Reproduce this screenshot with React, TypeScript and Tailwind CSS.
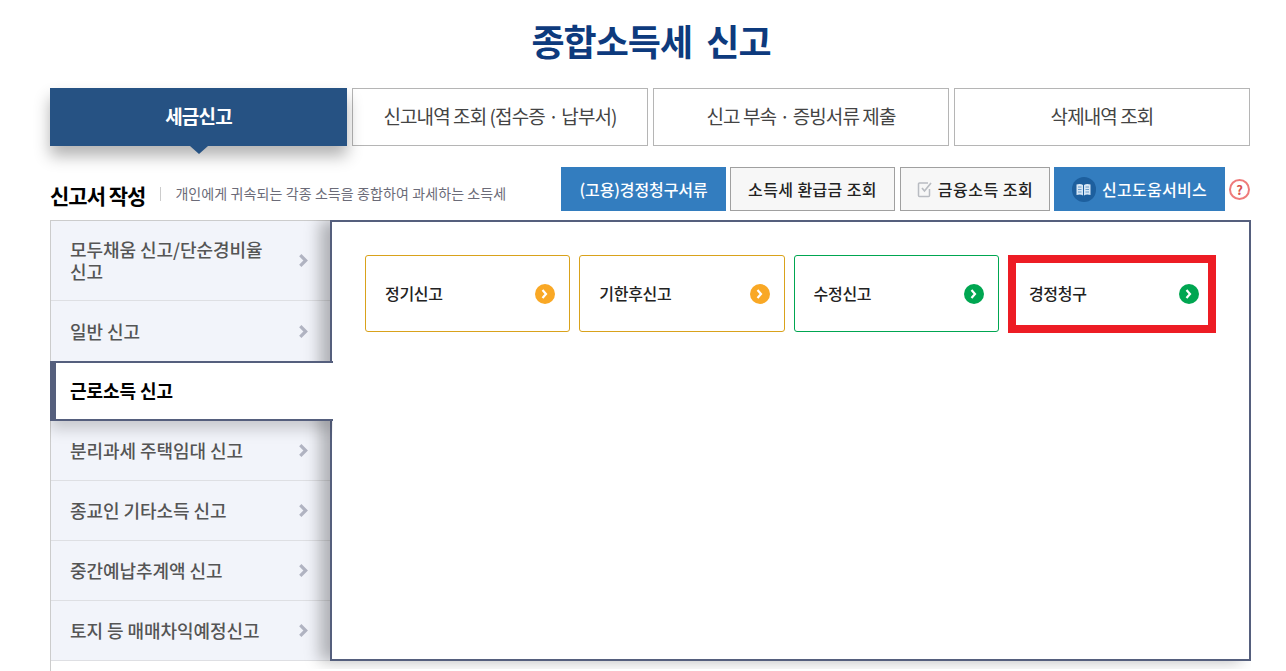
const FONT = "font-['Noto_Sans_CJK_KR','Noto_Sans',sans-serif]"

const tabs = ['신고내역 조회 (접수증 · 납부서)', '신고 부속 · 증빙서류 제출', '삭제내역 조회']

const cards = [
  { label: '정기신고', border: 'border-[#d9a21b]', dot: 'bg-[#f9a825]' },
  { label: '기한후신고', border: 'border-[#d9a21b]', dot: 'bg-[#f9a825]' },
  { label: '수정신고', border: 'border-[#00a651]', dot: 'bg-[#00a651]' },
]

const Chevron = ({ className }: { className: string }) => (
  <svg className={className} viewBox="0 0 10 14" fill="none">
    <path d="M2 2l5 5-5 5" stroke="currentColor" strokeWidth="3" />
  </svg>
)

const Dot = ({ color }: { color: string }) => (
  <span className={`flex h-5 w-5 items-center justify-center rounded-full ${color}`}>
    <svg className="h-[10px] w-[8px] text-white" viewBox="0 0 8 10" fill="none">
      <path d="M1.5 1l3.5 4-3.5 4" stroke="currentColor" strokeWidth="2.2" />
    </svg>
  </span>
)

const MenuItem = ({ label, tall, last }: { label: string; tall?: boolean; last?: boolean }) => (
  <div className={`flex items-center pl-[19px] pr-[21px] ${tall ? 'h-[80px]' : 'h-[60px]'} ${last ? '' : 'border-b border-[#dedfe3]'}`}>
    <span className="w-[210px] pb-[1px] text-[18px] leading-[22px] font-medium tracking-[-0.05px] break-keep text-[#555]">{label}</span>
    <Chevron className="ml-auto h-[15px] w-[11px] text-[#b1b4c2]" />
  </div>
)

export default function App() {
  return (
    <main className={`h-screen overflow-hidden bg-white pr-[36px] pl-[50px] ${FONT}`}>
      <h1 className="pt-[13px] pl-[2px] text-center text-[36px] leading-[54px] font-bold tracking-[-1px] text-[#0d3a7d]">
        종합소득세&nbsp; 신고
      </h1>

      <nav className="mt-[21px] flex h-[58px] gap-[5px]">
        <div className="relative flex w-[297px] items-center justify-center bg-[#265283] pb-[2px] text-[19px] font-bold tracking-[-0.8px] text-white shadow-[0_10px_15px_rgba(0,0,0,0.3)]">
          세금신고
          <span className="absolute top-full left-1/2 h-0 w-0 -translate-x-1/2 border-x-[9px] border-t-[8px] border-x-transparent border-t-[#265283]" />
        </div>
        {tabs.map((tab) => (
          <div
            key={tab}
            className="flex flex-1 items-center justify-center border border-[#b5b5b5] pb-[2px] text-[19px] tracking-[-0.9px] text-[#444]"
          >
            {tab}
          </div>
        ))}
      </nav>

      <div className="mt-[21px] flex h-[44px] items-center">
        <h2 className="pt-[11px] text-[21px] leading-[32px] font-bold tracking-[-1px] text-black">신고서 작성</h2>
        <span className="mt-[9px] ml-[15px] h-[14px] w-px bg-[#ccc]" />
        <p className="mt-[8px] ml-[14px] text-[14px] tracking-[0.1px] text-[#6b6b78]">
          개인에게 귀속되는 각종 소득을 종합하여 과세하는 소득세
        </p>
        <div className="ml-auto flex h-full items-center text-[16px] font-medium">
          <button className="flex h-full w-[165px] items-center justify-center bg-[#337dbf] tracking-[-0.1px] text-white">(고용)경정청구서류</button>
          <button className="ml-[4px] flex h-full w-[165px] items-center justify-center border border-[#a0a0a0] bg-[#f7f7f7] tracking-[0.4px] text-[#222]">
            소득세 환급금 조회
          </button>
          <button className="ml-[5px] flex h-full w-[150px] items-center justify-center gap-[5px] border border-[#a0a0a0] bg-[#f7f7f7] tracking-[0.5px] text-[#222]">
            <svg className="h-[17px] w-[16px] text-[#b9bcc2]" viewBox="0 0 16 17" fill="none">
              <path d="M11 2H2.5a1 1 0 0 0-1 1v11.5a1 1 0 0 0 1 1h9a1 1 0 0 0 1-1V8" stroke="currentColor" strokeWidth="1.5" />
              <path d="M5 7l2.5 3L14 2" stroke="currentColor" strokeWidth="1.7" />
            </svg>
            금융소득 조회
          </button>
          <button className="ml-[4px] flex h-full w-[171px] items-center justify-center gap-[6px] bg-[#337dbf] tracking-[0.3px] text-white">
            <span className="flex h-[25px] w-[24px] items-center justify-center rounded-full bg-[#1d5f9e]">
              <svg className="h-[13px] w-[15px]" viewBox="0 0 15 13">
                <path d="M0.5 1.5C3 0.5 5.5 0.8 7 2v10.5C5.5 11.3 3 11 0.5 12zM14.5 1.5C12 0.5 9.5 0.8 8 2v10.5c1.5-1.2 4-1.5 6.5-0.5z" fill="#d6e6f5" />
                <path d="M2 4h3.5M2 6.5h3.5M2 9h3.5M9.5 4H13M9.5 6.5H13M9.5 9H13" stroke="#5b93c6" strokeWidth="0.9" />
              </svg>
            </span>
            신고도움서비스
          </button>
          <span className="ml-[4px] flex h-[21px] w-[21px] items-center justify-center rounded-full border-2 border-[#ee7b7b] text-[13px] leading-none font-bold text-[#d9534f]">
            ?
          </span>
        </div>
      </div>

      <section className="mt-[9px] flex">
        <aside className="w-[280px] shrink-0 border-t border-l border-[#cccccc]">
          <div className="bg-[#f2f4fa]">
            <MenuItem label="모두채움 신고/단순경비율 신고" tall />
            <MenuItem label="일반 신고" last />
          </div>
          <div className="relative z-10 -ml-px flex h-[60px] w-[283px] items-center border-y-2 border-l-[6px] border-[#555f7d] bg-white pb-[2px] pl-[14px] text-[18px] font-bold tracking-[-0.05px] text-black shadow-[0_8px_14px_rgba(0,0,0,0.18)] [clip-path:inset(0_0_-24px_0)]">
            근로소득 신고
          </div>
          <div className="bg-[#f2f4fa]">
            <MenuItem label="분리과세 주택임대 신고" />
            <MenuItem label="종교인 기타소득 신고" />
            <MenuItem label="중간예납추계액 신고" />
            <MenuItem label="토지 등 매매차익예정신고" />
          </div>
          <div className="h-[20px]" />
        </aside>

        <div className="relative h-[441px] flex-1 border-2 border-[#555f7d] bg-white px-[33px] pt-[33px] shadow-[-10px_0_15px_rgba(0,0,0,0.28)] [clip-path:inset(0_0_-8px_-30px)]">
          <div className="flex items-start gap-[9px]">
            {cards.map((card) => (
              <div
                key={card.label}
                className={`flex h-[77px] w-[205.3px] items-center justify-between rounded-[3px] border pr-[14px] pl-[19px] ${card.border}`}
              >
                <span className="pb-[2px] text-[16px] font-medium tracking-[-0.3px] text-[#222]">{card.label}</span>
                <Dot color={card.dot} />
              </div>
            ))}
            <div className="flex h-[78px] w-[208px] items-center justify-between border-[8px] border-[#ed1c24] pr-[9px] pl-[13px]">
              <span className="pb-[2px] text-[16px] font-medium tracking-[-0.3px] text-[#222]">경정청구</span>
              <Dot color="bg-[#00a651]" />
            </div>
          </div>
        </div>
      </section>
    </main>
  )
}
